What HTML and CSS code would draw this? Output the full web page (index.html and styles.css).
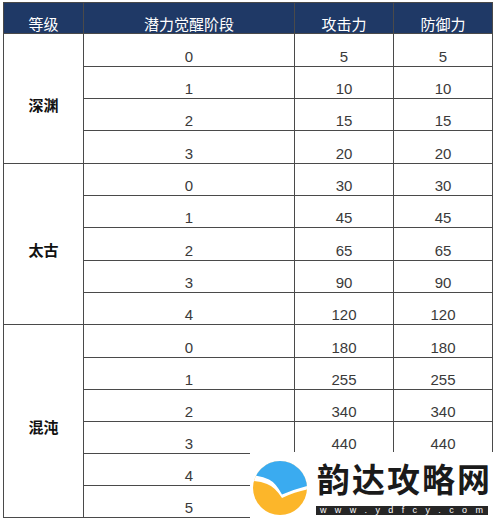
FILE: index.html
```html
<!DOCTYPE html>
<html lang="zh">
<head>
<meta charset="utf-8">
<link rel="stylesheet" href="styles.css">
</head>
<body>
<div class="page">
  <div class="grid">
    <div class="hd">等级</div>
    <div class="hd">潜力觉醒阶段</div>
    <div class="hd">攻击力</div>
    <div class="hd">防御力</div>

    <div class="lv lv-a">深渊</div>
    <div class="lv lv-b">太古</div>
    <div class="lv lv-c">混沌</div>

    <div class="c">0</div><div class="c">5</div><div class="c">5</div>
    <div class="c">1</div><div class="c">10</div><div class="c">10</div>
    <div class="c">2</div><div class="c">15</div><div class="c">15</div>
    <div class="c">3</div><div class="c">20</div><div class="c">20</div>

    <div class="c">0</div><div class="c">30</div><div class="c">30</div>
    <div class="c">1</div><div class="c">45</div><div class="c">45</div>
    <div class="c">2</div><div class="c">65</div><div class="c">65</div>
    <div class="c">3</div><div class="c">90</div><div class="c">90</div>
    <div class="c">4</div><div class="c">120</div><div class="c">120</div>

    <div class="c">0</div><div class="c">180</div><div class="c">180</div>
    <div class="c">1</div><div class="c">255</div><div class="c">255</div>
    <div class="c">2</div><div class="c">340</div><div class="c">340</div>
    <div class="c">3</div><div class="c">440</div><div class="c">440</div>
    <div class="c">4</div><div class="c"></div><div class="c"></div>
    <div class="c">5</div><div class="c"></div><div class="c"></div>
  </div>

  <div class="mark">
    <svg class="logo" width="54" height="54" viewBox="0 0 54 54">
      <defs><clipPath id="cc"><circle cx="27" cy="27" r="27"/></clipPath></defs>
      <g clip-path="url(#cc)">
        <rect x="0" y="0" width="54" height="54" fill="#fcb62a"/>
        <path d="M0,0 H54 V28.6 Q42,31 29,37 Q22,26 14,23 Q8,20.5 0,20 Z" fill="#ffffff"/>
        <path d="M0,0 H54 V25 Q42,28 29,33.6 Q23,22 16,18.5 Q10,15.5 4.6,15 L0,14 Z" fill="#3aabf0"/>
      </g>
    </svg>
    <div class="brand">
      <div class="title">韵达攻略网</div>
      <div class="url"><span>w</span><span>w</span><span>w</span><span>.</span><span>y</span><span>d</span><span>f</span><span>c</span><span>y</span><span>.</span><span>c</span><span>o</span><span>m</span></div>
    </div>
  </div>
</div>
</body>
</html>
```

FILE: styles.css
```css
html, body {
  margin: 0;
  padding: 0;
  background: #ffffff;
}

.page {
  position: relative;
  width: 500px;
  height: 521px;
  overflow: hidden;
  box-sizing: border-box;
  padding: 2px 0 0 3px;
}

.grid {
  display: grid;
  width: 490px;
  box-sizing: border-box;
  padding: 1px;
  gap: 1px;
  background: #4a4a4a;
  grid-template-columns: 79px 210px 98px 98px;
  grid-template-rows: 30px 32px 31px 31px 32px 31px 31px 32px 31px 31px 32px 31px 31px 31px 31px 31px;
}

.hd {
  background: #1f3966;
  color: #ffffff;
  font-family: "Noto Sans CJK SC", "Liberation Sans", sans-serif;
  font-size: 15px;
  line-height: 17px;
  display: flex;
  align-items: flex-end;
  justify-content: center;
  padding-bottom: 1px;
}

.c {
  background: #ffffff;
  color: #3a3a3a;
  font-family: "Liberation Sans", "Noto Sans CJK SC", sans-serif;
  font-size: 15px;
  line-height: 17px;
  display: flex;
  align-items: flex-end;
  justify-content: center;
  padding-bottom: 1px;
}

.lv {
  background: #ffffff;
  color: #111111;
  grid-column: 1;
  font-family: "Noto Sans CJK SC", sans-serif;
  font-weight: 700;
  font-size: 15px;
  line-height: 18px;
  display: flex;
  align-items: center;
  justify-content: center;
  padding-top: 12px;
}

.lv-a { grid-row: 2 / span 4; }
.lv-b { grid-row: 6 / span 5; }
.lv-c { grid-row: 11 / span 6; }

.mark {
  position: absolute;
  left: 250px;
  top: 452px;
  width: 250px;
  height: 69px;
  background: #ffffff;
  display: flex;
  align-items: flex-start;
  padding: 9px 0 0 3px;
  box-sizing: border-box;
}

.logo {
  display: block;
  flex: none;
}

.brand {
  margin-left: 9px;
  width: 172px;
  display: flex;
  flex-direction: column;
}

.title {
  font-family: "Noto Sans CJK SC", sans-serif;
  font-weight: 700;
  font-size: 33px;
  line-height: 33px;
  letter-spacing: 2px;
  color: #1a1a1a;
  margin-top: 1px;
  padding-left: 1px;
  white-space: nowrap;
}

.url {
  margin-top: 11px;
  height: 9px;
  background: #262626;
  color: #ffffff;
  font-family: "Liberation Sans", sans-serif;
  font-size: 9px;
  line-height: 9px;
  display: flex;
  justify-content: space-between;
  padding: 0 5px 0 4px;
}
```
